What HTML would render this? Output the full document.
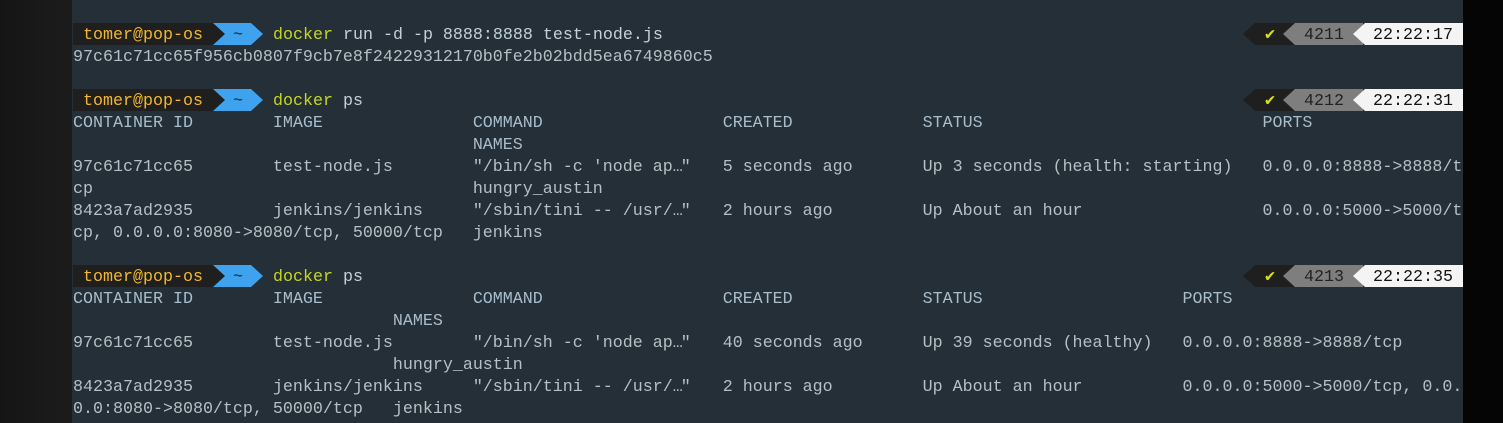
<!DOCTYPE html>
<html><head><meta charset="utf-8"><style>
html,body{margin:0;padding:0;width:1503px;height:423px;overflow:hidden;background:#0c0c0c;}
#term{position:absolute;left:72px;top:0;width:1391px;height:423px;background:#252f37;}
#left{position:absolute;left:0;top:0;width:72px;height:423px;background:linear-gradient(90deg,#151515,#1c1c1c);}
#right{position:absolute;left:1463px;top:0;width:40px;height:423px;background:#050505;}
.l{position:absolute;left:73px;height:22px;line-height:22px;font-family:"Liberation Mono",monospace;font-size:16.67px;color:#b4c0c6;white-space:pre;}
.h{color:#a9bccb;}
.seg{position:absolute;height:20px;padding-top:2px;line-height:22px;font-family:"Liberation Mono",monospace;font-size:16.67px;white-space:pre;}
.user{left:73px;width:152px;background:#1f1f1f;color:#f2b72e;clip-path:polygon(0 0,140px 0,152px 11px,140px 22px,0 22px);}
.user span{padding-left:10px;}
.tilde{left:213px;width:50px;background:#3ea2ee;color:#1d2a33;clip-path:polygon(0 0,38px 0,50px 11px,38px 22px,0 22px,12px 11px);text-align:center;}
.cmd{position:absolute;left:273px;height:22px;line-height:22px;font-family:"Liberation Mono",monospace;font-size:16.67px;color:#c2d2da;white-space:pre;}
.cmd b{color:#c4d624;font-weight:normal;}
.r1{left:1243px;width:52px;background:#1f1f1f;color:#d4e21c;clip-path:polygon(0 11px,12px 0,52px 0,52px 22px,12px 22px);}
.r1 span{padding-left:22px;}
.r2{left:1283px;width:80px;background:#7e7e7e;color:#222;clip-path:polygon(0 11px,12px 0,80px 0,80px 22px,12px 22px);}
.r2 span{padding-left:21px;}
.r3{left:1353px;width:110px;background:#f4f4f4;color:#111;clip-path:polygon(0 11px,12px 0,110px 0,110px 22px,12px 22px);}
.r3 span{padding-left:20px;}
.e{display:inline-block;width:20px;letter-spacing:-2px;}
</style></head><body>
<div id="left"></div><div id="term"></div><div id="right"></div>

<div class="seg user" style="top:23px"><span>tomer@pop-os</span></div>
<div class="seg tilde" style="top:23px">~</div>
<div class="cmd" style="top:25px"><b>docker</b> run -d -p 8888:8888 test-node.js</div>
<div class="seg r1" style="top:23px"><span>✔</span></div>
<div class="seg r2" style="top:23px"><span>4211</span></div>
<div class="seg r3" style="top:23px"><span>22:22:17</span></div>
<div class="l" style="top:47px">97c61c71cc65f956cb0807f9cb7e8f24229312170b0fe2b02bdd5ea6749860c5</div>

<div class="seg user" style="top:89px"><span>tomer@pop-os</span></div>
<div class="seg tilde" style="top:89px">~</div>
<div class="cmd" style="top:91px"><b>docker</b> ps</div>
<div class="seg r1" style="top:89px"><span>✔</span></div>
<div class="seg r2" style="top:89px"><span>4212</span></div>
<div class="seg r3" style="top:89px"><span>22:22:31</span></div>
<div class="l h" style="top:113px">CONTAINER ID        IMAGE               COMMAND                  CREATED             STATUS                            PORTS</div>
<div class="l h" style="top:135px">                                        NAMES</div>
<div class="l" style="top:157px">97c61c71cc65        test-node.js        "/bin/sh -c 'node ap<span class="e">…"</span>   5 seconds ago       Up 3 seconds (health: starting)   0.0.0.0:8888-&gt;8888/t</div>
<div class="l" style="top:179px">cp                                      hungry_austin</div>
<div class="l" style="top:201px">8423a7ad2935        jenkins/jenkins     "/sbin/tini -- /usr/<span class="e">…"</span>   2 hours ago         Up About an hour                  0.0.0.0:5000-&gt;5000/t</div>
<div class="l" style="top:223px">cp, 0.0.0.0:8080-&gt;8080/tcp, 50000/tcp   jenkins</div>

<div class="seg user" style="top:265px"><span>tomer@pop-os</span></div>
<div class="seg tilde" style="top:265px">~</div>
<div class="cmd" style="top:267px"><b>docker</b> ps</div>
<div class="seg r1" style="top:265px"><span>✔</span></div>
<div class="seg r2" style="top:265px"><span>4213</span></div>
<div class="seg r3" style="top:265px"><span>22:22:35</span></div>
<div class="l h" style="top:289px">CONTAINER ID        IMAGE               COMMAND                  CREATED             STATUS                    PORTS</div>
<div class="l h" style="top:311px">                                NAMES</div>
<div class="l" style="top:333px">97c61c71cc65        test-node.js        "/bin/sh -c 'node ap<span class="e">…"</span>   40 seconds ago      Up 39 seconds (healthy)   0.0.0.0:8888-&gt;8888/tcp</div>
<div class="l" style="top:355px">                                hungry_austin</div>
<div class="l" style="top:377px">8423a7ad2935        jenkins/jenkins     "/sbin/tini -- /usr/<span class="e">…"</span>   2 hours ago         Up About an hour          0.0.0.0:5000-&gt;5000/tcp, 0.0.</div>
<div class="l" style="top:399px">0.0:8080-&gt;8080/tcp, 50000/tcp   jenkins</div>
</body></html>
